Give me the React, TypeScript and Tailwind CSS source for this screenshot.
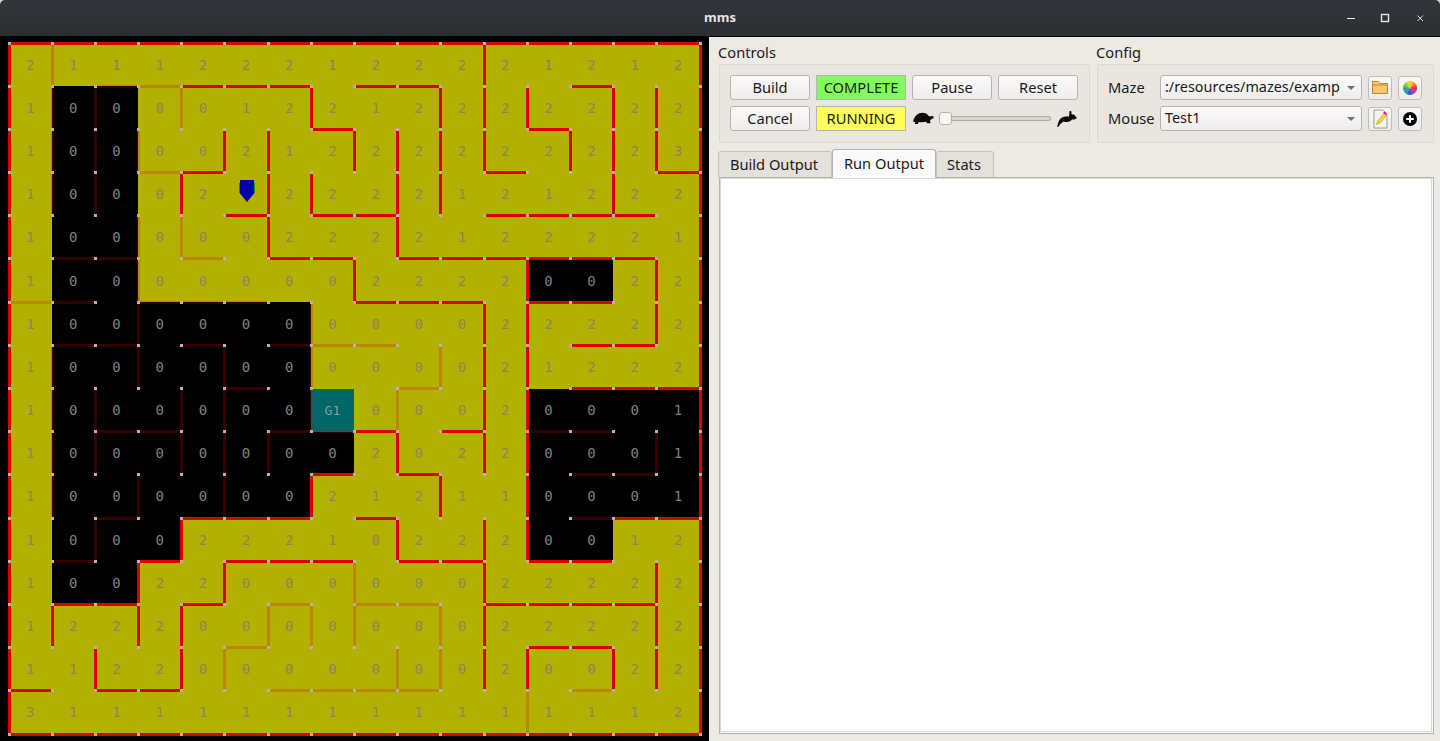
const uiFont = "font-['Noto_Sans',sans-serif]"

// distance values, one string per row, G = goal cell, . = hidden under the mouse
const values = [
  "2 1 1 1 2 2 2 1 2 2 2 2 1 2 1 2",
  "1 0 0 0 0 1 2 2 1 2 2 2 2 2 2 2",
  "1 0 0 0 0 2 1 2 2 2 2 2 2 2 2 3",
  "1 0 0 0 2 . 2 2 2 2 1 2 1 2 2 2",
  "1 0 0 0 0 0 2 2 2 2 1 2 2 2 2 1",
  "1 0 0 0 0 0 0 0 2 2 2 2 0 0 2 2",
  "1 0 0 0 0 0 0 0 0 0 0 2 2 2 2 2",
  "1 0 0 0 0 0 0 0 0 0 0 2 1 2 2 2",
  "1 0 0 0 0 0 0 G 0 0 0 2 0 0 0 1",
  "1 0 0 0 0 0 0 0 2 0 2 2 0 0 0 1",
  "1 0 0 0 0 0 0 2 1 2 1 1 0 0 0 1",
  "1 0 0 0 2 2 2 1 0 2 2 2 0 0 1 2",
  "1 0 0 2 2 0 0 0 0 0 0 2 2 2 2 2",
  "1 2 2 2 0 0 0 0 0 0 0 2 2 2 2 2",
  "1 1 2 2 0 0 0 0 0 0 0 2 0 0 2 2",
  "3 1 1 1 1 1 1 1 1 1 1 1 1 1 1 2",
].map((row) => row.split(" "))

// unexplored cells, drawn black: [row, first col, last col]
const blackRuns = [
  [1, 1, 2], [2, 1, 2], [3, 1, 2], [4, 1, 2], [5, 1, 2], [5, 12, 13],
  [6, 1, 6], [7, 1, 6], [8, 1, 6], [8, 12, 15], [9, 1, 7], [9, 12, 15],
  [10, 1, 6], [10, 12, 15], [11, 1, 3], [11, 12, 13], [12, 1, 2],
]

const isBlack = (r: number, c: number) => blackRuns.some(([row, a, b]) => row === r && c >= a && c <= b)

const all = Array.from({ length: 16 }, (_, i) => i)

// horizontal walls: index is the post row, entries are columns
const redH = [
  all, [4, 5, 6, 8, 9, 13], [7, 12], [4, 11, 15], [5, 7, 8, 11, 12, 13, 14],
  [6, 7, 9, 10, 11, 12, 13, 14], [8, 9, 10, 12, 13], [13, 14], [13, 14, 15], [8, 10],
  [7, 9], [4, 5, 6, 8, 14, 15], [3, 5, 6, 7, 9, 10, 12, 13], [1, 2, 4, 11, 12, 13, 14],
  [12, 13], [0, 2, 3], all,
]
const dimH = [
  [], [2, 3], [], [3], [], [1, 2, 4], [0, 1, 3, 4, 5], [1, 2, 4, 6, 7, 8], [5, 9],
  [2, 3, 6, 7, 12, 13], [13, 14], [2, 13], [1], [6, 8, 9], [5], [6, 7, 8, 9, 13], [],
]
// vertical walls: index is the cell row, entries are post columns
const redV = [
  [11], [7, 10, 11, 12, 14, 15], [5, 6, 8, 9, 10, 11, 13, 14, 15], [4, 6, 7, 9, 10, 14],
  [6, 9], [8, 12, 15], [11, 12, 15], [11, 12], [11, 12], [9, 11, 12], [7, 10, 12],
  [4, 9, 11, 12], [3, 5, 11, 15], [1, 3, 4, 11, 15], [2, 4, 11, 12, 14, 15], [],
].map((row) => [0, ...row, 16])
const dimV = [
  [1], [1, 2, 4], [1, 2, 3], [1, 2], [3, 4], [3], [3, 7], [1, 3, 5, 7, 10], [1, 2, 4, 5, 7, 9],
  [1, 2, 4, 5, 6, 15], [1, 3, 5], [2], [8], [6, 7, 8, 10], [5, 9, 10], [12],
]

const PITCH = 691 / 16

const MazeWalls = () => {
  const posts = new Set<string>()
  const lines: { x1: number; y1: number; x2: number; y2: number; dim: boolean }[] = []
  const add = (i1: number, j1: number, i2: number, j2: number, dim: boolean) => {
    posts.add(`${i1},${j1}`)
    posts.add(`${i2},${j2}`)
    lines.push({ x1: i1 * PITCH, y1: j1 * PITCH, x2: i2 * PITCH, y2: j2 * PITCH, dim })
  }
  redH.forEach((cols, j) => cols.forEach((i) => add(i, j, i + 1, j, false)))
  dimH.forEach((cols, j) => cols.forEach((i) => add(i, j, i + 1, j, true)))
  redV.forEach((cols, j) => cols.forEach((i) => add(i, j, i, j + 1, false)))
  dimV.forEach((cols, j) => cols.forEach((i) => add(i, j, i, j + 1, true)))

  return (
    <svg className="absolute inset-0 overflow-visible" width={691} height={691} shapeRendering="crispEdges">
      {lines.map((l, n) => (
        <line key={n} x1={l.x1} y1={l.y1} x2={l.x2} y2={l.y2} stroke="#d80000" strokeOpacity={l.dim ? 0.24 : 1} strokeWidth={3} />
      ))}
      {[...posts].map((p) => {
        const [i, j] = p.split(",").map(Number)
        return <rect key={p} x={i * PITCH - 1.5} y={j * PITCH - 1.5} width={3} height={3} fill="#b4b4b4" />
      })}
    </svg>
  )
}

const Maze = () => (
  <div className="relative w-[691px] h-[691px] ml-[8.5px] mt-[6px]">
    <div className="grid grid-cols-[repeat(16,1fr)] grid-rows-[repeat(16,1fr)] w-full h-full font-['DejaVu_Sans_Mono',monospace] text-[14px] leading-none">
      {values.map((row, r) =>
        row.map((v, c) => (
          <div
            key={`${r}-${c}`}
            className={
              v === "G"
                ? "flex items-center justify-center bg-[#006666] text-[13px] text-[#7f9f9f]"
                : isBlack(r, c)
                  ? "flex items-center justify-center bg-black text-[#808080]"
                  : "flex items-center justify-center bg-[#b4b000] text-[#88885a]"
            }
          >
            {v === "G" ? "G1" : v === "." ? "" : v}
          </div>
        )),
      )}
    </div>
    <MazeWalls />
    <svg className="absolute left-[230.5px] top-[137px]" width={16} height={22} viewBox="0 0 16 22">
      <path d="M0.5 3V13M15.5 3V13" stroke="#00a000" strokeWidth={1} />
      <path d="M1 0H15V13.5L8 22L1 13.5Z" fill="#0000aa" />
    </svg>
  </div>
)

const WindowButtons = () => (
  <div className="absolute right-0 top-0 h-full flex items-center text-[#e6e6e6]">
    <svg width={34} height={37} viewBox="0 0 34 37">
      <path d="M13 18.5H21" stroke="currentColor" strokeWidth={1} />
    </svg>
    <svg width={34} height={37} viewBox="0 0 34 37">
      <rect x={13.5} y={14.5} width={7} height={7} fill="none" stroke="currentColor" strokeWidth={1.4} />
    </svg>
    <svg width={38} height={37} viewBox="0 0 38 37">
      <path d="M15.5 15.5L21 21M21 15.5L15.5 21" stroke="currentColor" strokeWidth={1} />
    </svg>
  </div>
)

const PushButton = ({ label }: { label: string }) => (
  <div className="flex items-center justify-center w-[80px] h-[25px] pb-[2px] rounded-[3px] border border-[#b6b2ae] bg-gradient-to-b from-[#fbfafa] to-[#efedec] text-[14.67px] text-[#1a1a1a]">
    {label}
  </div>
)

const StatusBox = ({ label, color }: { label: string; color: string }) => (
  <div className={`flex items-center justify-center w-[90px] h-[25px] pb-[2px] border border-[#b6b2ae] text-[14.67px] text-[#1a1a1a] ${color}`}>
    {label}
  </div>
)

const Turtle = () => (
  <svg width={21} height={13} viewBox="0 0 21 13" className="shrink-0">
    <path
      d="M0 9.5C1.5 4 5 0.8 9.5 0.8C12.8 0.8 14.8 2.4 16 4.6C17.6 3.6 19.6 3.8 20.8 4.8C20.8 6.2 19.4 7.2 17.8 7.4C17 8 16.8 9.4 17.6 11.2L14 11.2L13.2 9.8C10.6 10.4 8 10.4 5.6 10L5 12L1.6 12L2.4 10.2Z"
      fill="#0a0a0a"
    />
  </svg>
)

const Rabbit = () => (
  <svg width={20} height={16} viewBox="0 0 20 16" className="shrink-0">
    <path
      d="M0 15.6L1.5 11C2.2 8.2 5 6 8.4 5.6C10 5.4 11 5.8 12 5.4L12.6 0L14.2 0L14.6 3.4L17 3.6L20 7L17.5 8.6L15 8.6C14 10.2 12 11 10 11C8.6 11 7.4 10.6 6.4 10.8C5 11.4 3.6 12.8 2.6 14.2L1.6 15.8Z"
      fill="#0a0a0a"
    />
  </svg>
)

const IconButton = ({ children }: { children: React.ReactNode }) => (
  <div className="flex items-center justify-center w-[24px] h-[24px] rounded-[3px] border border-[#c0bcb8] bg-gradient-to-b from-[#f8f7f6] to-[#eeecea]">
    {children}
  </div>
)

// clockwise from the top of the wheel
const wheelColors = ["#f7c52c", "#f28a2a", "#e8452e", "#e02f55", "#c0309c", "#7a3fb0", "#3461c1", "#2a8fd0", "#2aa876", "#5cb845", "#a0c83c", "#e0d830"]

const ColorWheel = () => (
  <svg width={14} height={14} viewBox="-7 -7 14 14">
    {wheelColors.map((color, n) => {
      const a = ((n - 3) * Math.PI) / 6
      const b = ((n - 2) * Math.PI) / 6
      return (
        <path
          key={color}
          d={`M0 0L${7 * Math.cos(a)} ${7 * Math.sin(a)}A7 7 0 0 1 ${7 * Math.cos(b)} ${7 * Math.sin(b)}Z`}
          fill={color}
        />
      )
    })}
  </svg>
)

const Folder = () => (
  <svg width={16} height={13} viewBox="0 0 16 13">
    <path d="M0.5 12.5V0.5H6.5L8 2.5H15.5V12.5Z" fill="#fbc56d" stroke="#b58a3c" />
    <path d="M0.5 4H15.5" stroke="#b58a3c" />
  </svg>
)

const NoteEdit = () => (
  <svg width={15} height={20} viewBox="0 0 15 20">
    <path d="M1 1H10L14 5V19H1Z" fill="#f4f4f2" stroke="#9a9a9a" />
    <path d="M3.5 15.5L4.5 12L11 4.5L13.5 6.5L7 14Z" fill="#f6d53f" stroke="#a88a20" strokeWidth={0.5} />
    <path d="M11.2 2.5L13.8 4.6L12.8 6L10 3.9Z" fill="#d81e7a" />
  </svg>
)

const AddCircle = () => (
  <svg width={14} height={14} viewBox="0 0 14 14">
    <circle cx={7} cy={7} r={7} fill="#000" />
    <path d="M7 3.2V10.8M3.2 7H10.8" stroke="#fff" strokeWidth={2} />
  </svg>
)

const ComboBox = ({ value }: { value: string }) => (
  <div className="flex items-center w-[202px] h-[25px] pb-[2px] pl-[4px] pr-[6px] rounded-[3px] border border-[#b6b2ae] bg-gradient-to-b from-[#fbfafa] to-[#efedec] text-[14.4px] text-[#1a1a1a]">
    <span className="flex-1 whitespace-nowrap">{value}</span>
    <span className="mt-[2px] w-0 h-0 border-x-[4px] border-x-transparent border-t-[4px] border-t-[#6e6e6e]" />
  </div>
)

const Tab = ({ label, active, width }: { label: string; active?: boolean; width: string }) =>
  active ? (
    <div className={`relative z-10 flex items-center justify-center ${width} h-[29px] -mb-[1px] pb-[2px] rounded-t-[3px] border border-b-0 border-[#b6b2ae] bg-[#fbfafa] text-[14.67px] text-[#1a1a1a]`}>
      {label}
    </div>
  ) : (
    <div className={`flex items-center justify-center ${width} h-[26px] pb-[2px] pr-[2px] rounded-t-[3px] border border-b-0 border-[#c6c2be] bg-[#e4e1dd] text-[14.67px] text-[#1a1a1a]`}>
      {label}
    </div>
  )

export default function App() {
  return (
    <div className={`w-[1440px] h-[741px] flex flex-col overflow-hidden bg-[#d8d8d8] ${uiFont}`}>
      <header className="relative flex items-center justify-center h-[37px] shrink-0 rounded-t-[5px] border-b border-black bg-gradient-to-b from-[#30353a] to-[#2c3032]">
        <span className="text-[13px] font-bold text-[#e6e6e6]">mms</span>
        <WindowButtons />
      </header>
      <div className="flex flex-1 min-h-0">
        <div className="w-[709px] shrink-0 bg-black">
          <Maze />
        </div>
        <div className="flex-1 flex flex-col bg-[#edeae6] pl-[9px] pr-[6px] text-[#1a1a1a]">
          <div className="flex gap-[7px] h-[112px] shrink-0">
            <section className="flex flex-col w-[372px]">
              <h2 className="h-[27px] pt-[2px] flex items-center text-[14.67px] font-normal">Controls</h2>
              <div className="flex flex-col gap-[6px] ml-[1px] w-[371px] h-[79px] pt-[10px] pl-[10px] rounded-[2px] border border-[#dcd8d4] bg-[#e9e6e2]">
                <div className="flex gap-[6px]">
                  <PushButton label="Build" />
                  <StatusBox label="COMPLETE" color="bg-[#80ff5c]" />
                  <PushButton label="Pause" />
                  <PushButton label="Reset" />
                </div>
                <div className="flex gap-[6px]">
                  <PushButton label="Cancel" />
                  <StatusBox label="RUNNING" color="bg-[#ffff5a]" />
                  <div className="flex items-center w-[166px] pl-[1px]">
                    <Turtle />
                    <div className="relative ml-[5px] w-[112px] h-[5px] rounded-[2px] border border-[#aeaaa6] bg-[#d8d4d0]">
                      <div className="absolute -left-[1px] -top-[5px] w-[13px] h-[13px] rounded-[3px] border border-[#b6b2ae] bg-[#f8f7f6]" />
                    </div>
                    <span className="w-[6px]" />
                    <Rabbit />
                  </div>
                </div>
              </div>
            </section>
            <section className="flex flex-col w-[337px]">
              <h2 className="h-[27px] pt-[2px] -ml-[1px] flex items-center text-[14.67px] font-normal">Config</h2>
              <div className="flex flex-col gap-[6px] h-[79px] pt-[10px] pl-[10px] rounded-[2px] border border-[#dcd8d4] bg-[#e9e6e2]">
                <div className="flex items-center">
                  <span className="w-[52px] pb-[2px] text-[14.67px]">Maze</span>
                  <ComboBox value=":/resources/mazes/examp" />
                  <span className="w-[6px]" />
                  <IconButton><Folder /></IconButton>
                  <span className="w-[6px]" />
                  <IconButton><ColorWheel /></IconButton>
                </div>
                <div className="flex items-center">
                  <span className="w-[52px] pb-[2px] text-[14.67px]">Mouse</span>
                  <ComboBox value="Test1" />
                  <span className="w-[6px]" />
                  <IconButton><NoteEdit /></IconButton>
                  <span className="w-[6px]" />
                  <IconButton><AddCircle /></IconButton>
                </div>
              </div>
            </section>
          </div>
          <div className="flex items-end h-[28px] shrink-0">
            <Tab label="Build Output" width="w-[114px]" />
            <Tab label="Run Output" width="w-[104px]" active />
            <Tab label="Stats" width="w-[58px]" />
          </div>
          <div className="ml-[1px] h-[557px] shrink-0 border border-[#b6b2ae] bg-[#fbfafa] pr-[1px] pb-[1px]">
            <div className="w-full h-full border border-[#dcdad7] bg-white" />
          </div>
        </div>
      </div>
    </div>
  )
}
